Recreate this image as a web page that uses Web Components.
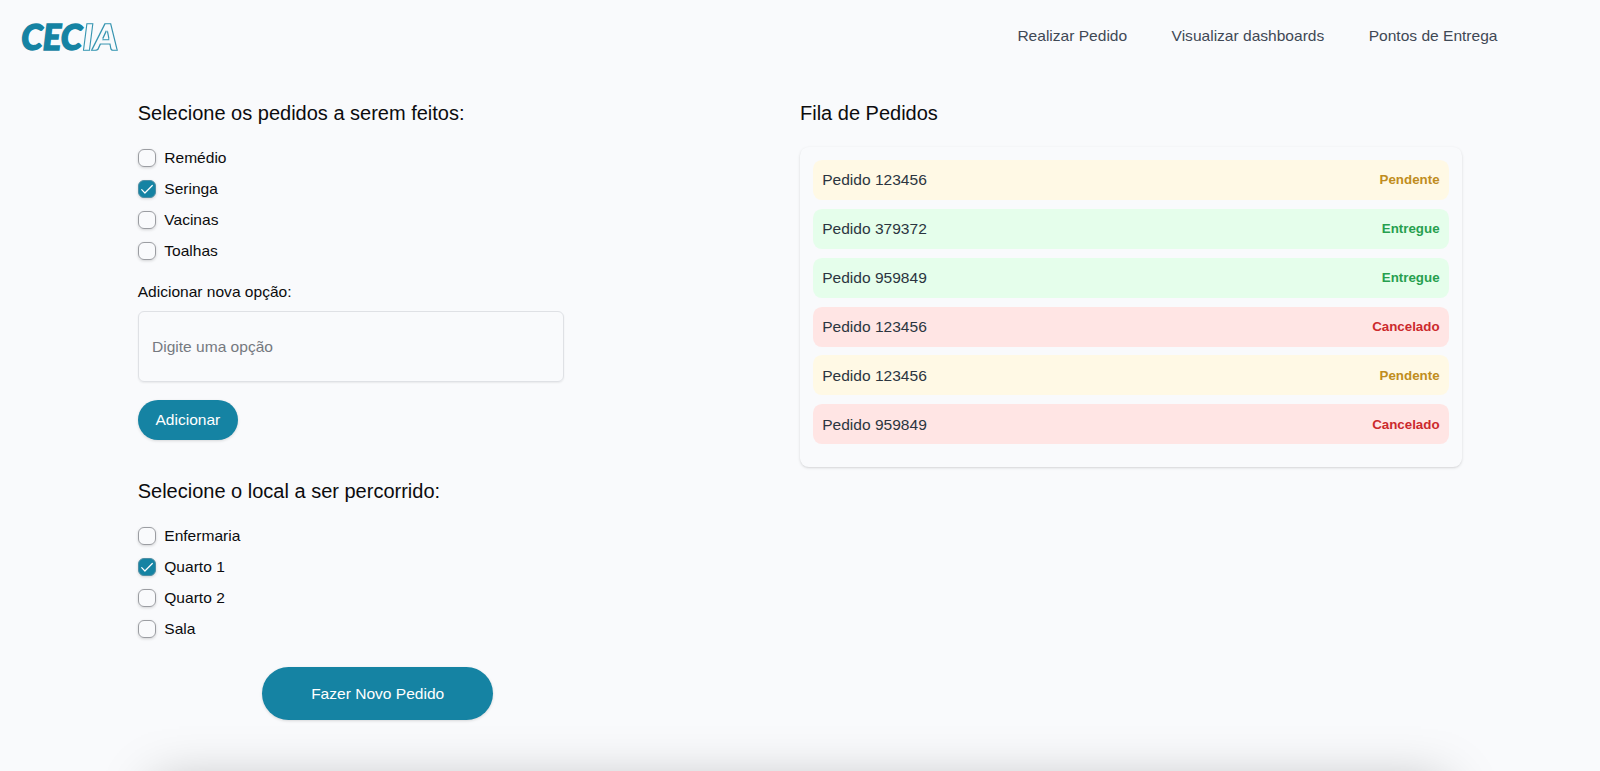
<!DOCTYPE html>
<html lang="pt-BR">
<head>
<meta charset="utf-8">
<title>CECIA</title>
<style>
html,body{margin:0;height:100%;overflow:hidden}
body{background:#f9fafc;font-family:"Liberation Sans",Arial,sans-serif;font-size:15.556px;line-height:22.22px;color:#0c0c0e;--brand:#1583a3}
</style>
</head>
<body>
<cecia-app></cecia-app>
<script>
const define = (name, html, setup) => customElements.define(name, class extends HTMLElement {
  constructor() {
    super();
    this.attachShadow({ mode: 'open' }).innerHTML = html;
  }
  connectedCallback() { if (setup) setup(this, this.shadowRoot); }
});

define('cecia-logo', `<style>
:host{display:block;width:100px;height:34px}
svg{display:block;overflow:visible}
text{font-family:Lato,"Open Sans",sans-serif;font-weight:900;font-style:italic;font-size:36px}
</style>
<svg width="100" height="34" viewBox="0 0 100 34" aria-label="CECIA">
<defs><filter id="outline" x="-20%" y="-20%" width="140%" height="140%">
<feMorphology in="SourceGraphic" operator="erode" radius="1" result="core"/>
<feComposite in="SourceGraphic" in2="core" operator="out"/>
</filter></defs>
<text x="1.2" y="30.7" textLength="61" lengthAdjust="spacingAndGlyphs" fill="#1583a3" stroke="#1583a3" stroke-width="1.4">CEC</text>
<text x="62.6" y="30.7" textLength="35.5" lengthAdjust="spacingAndGlyphs" fill="#1583a3" stroke="#1583a3" stroke-width="1.5" filter="url(#outline)" opacity=".85">IA</text>
</svg>`);

define('nav-link', `<style>
:host{display:block;color:#3f4855;white-space:nowrap}
a{color:inherit;text-decoration:none}
</style><a><slot></slot></a>`);

define('site-header', `<style>
:host{display:flex;align-items:center;justify-content:space-between;height:72px;padding:0 102.5px 0 20px;box-sizing:border-box}
nav{display:flex;gap:44.44px}
</style><cecia-logo></cecia-logo><nav><slot></slot></nav>`);

define('section-title', `<style>
:host{display:block}
h2{margin:0;font-size:20px;font-weight:400;line-height:31.1px}
</style><h2><slot></slot></h2>`);

define('check-option', `<style>
:host{display:flex;align-items:center;gap:8.6px;height:31.11px}
.box{width:18px;height:18px;box-sizing:border-box;border:1px solid #9b9da2;border-radius:6px;box-shadow:0 1px 3px rgba(0,0,0,.16);display:flex;align-items:center;justify-content:center}
:host([checked]) .box{background:var(--brand);border-color:#4f8fa5}
svg{display:none;width:14px;height:14px;flex:none}
:host([checked]) svg{display:block}
</style><span class="box"><svg viewBox="0 0 14 14" fill="none" stroke="#fff" stroke-width="1.2" stroke-linecap="round" stroke-linejoin="round"><path d="M1.7 7.7 4.9 11 12.3 3.5"/></svg></span><span><slot></slot></span>`);

define('text-field', `<style>
:host{display:block}
input{display:block;box-sizing:border-box;width:426.5px;height:71px;padding:0 13.3px;border:1px solid #dfe1e5;border-radius:6px;background:transparent;font:inherit;box-shadow:0 1px 2px rgba(0,0,0,.07);outline:0}
input::placeholder{color:#757980;opacity:1}
</style><input>`, (host, root) => {
  root.querySelector('input').placeholder = host.getAttribute('placeholder');
});

define('pill-button', `<style>
:host{display:block}
button{display:flex;align-items:center;justify-content:center;width:100.4px;height:40px;padding:0;border:0;border-radius:27px;background:var(--brand);color:#fff;font:inherit;box-shadow:0 1px 3px rgba(0,0,0,.14)}
:host([size=large]) button{width:231.6px;height:53.3px}
</style><button><slot></slot></button>`);

define('order-row', `<style>
:host{display:flex;align-items:center;justify-content:space-between;height:40px;box-sizing:border-box;padding:.9px 9.4px 0 8.9px;border-radius:8.9px;color:#2b3540}
:host([status=Pendente]){background:#fff9e5;--status:#c08d20}
:host([status=Entregue]){background:#e5feeb;--status:#27a04f}
:host([status=Cancelado]){background:#ffe5e4;--status:#cc2a2d}
b{font-size:13.333px;color:var(--status)}
</style><span><slot></slot></span><b></b>`, (host, root) => {
  root.querySelector('b').textContent = host.getAttribute('status');
});

define('order-queue', `<style>
:host{display:flex;flex-direction:column;gap:8.89px;padding:13.33px 13.33px 22.22px;border-radius:8.9px;box-shadow:0 1px 3px rgba(0,0,0,.13),0 1px 2px -1px rgba(0,0,0,.1)}
</style><slot></slot>`);

define('window-shade', `<style>
:host{position:fixed;top:100%;left:154px;right:154px;height:200px;box-shadow:0 12px 50px rgba(0,0,0,.26);pointer-events:none}
</style>`);

define('cecia-app', `<style>
:host{display:block}
main{display:grid;grid-template-columns:662.3px 662.3px;padding:25.5px 0 0 137.7px;align-items:start}
.options{margin-top:13.8px}
.label{margin:13.8px 0 8.4px}
pill-button{margin-top:18px}
.place{margin-top:35.3px}
.submit{margin:22.2px 0 0 124.2px}
order-queue{margin-top:18px}
</style>
<site-header><nav-link>Realizar Pedido</nav-link><nav-link>Visualizar dashboards</nav-link><nav-link>Pontos de Entrega</nav-link></site-header>
<main>
<section>
<section-title>Selecione os pedidos a serem feitos:</section-title>
<div class="options"><check-option>Remédio</check-option><check-option checked>Seringa</check-option><check-option>Vacinas</check-option><check-option>Toalhas</check-option></div>
<div class="label">Adicionar nova opção:</div>
<text-field placeholder="Digite uma opção"></text-field>
<pill-button>Adicionar</pill-button>
<section-title class="place">Selecione o local a ser percorrido:</section-title>
<div class="options"><check-option>Enfermaria</check-option><check-option checked>Quarto 1</check-option><check-option>Quarto 2</check-option><check-option>Sala</check-option></div>
<pill-button class="submit" size="large">Fazer Novo Pedido</pill-button>
</section>
<section>
<section-title>Fila de Pedidos</section-title>
<order-queue>
<order-row status="Pendente">Pedido 123456</order-row>
<order-row status="Entregue">Pedido 379372</order-row>
<order-row status="Entregue">Pedido 959849</order-row>
<order-row status="Cancelado">Pedido 123456</order-row>
<order-row status="Pendente">Pedido 123456</order-row>
<order-row status="Cancelado">Pedido 959849</order-row>
</order-queue>
</section>
</main>
<window-shade></window-shade>`);
</script>
</body>
</html>
